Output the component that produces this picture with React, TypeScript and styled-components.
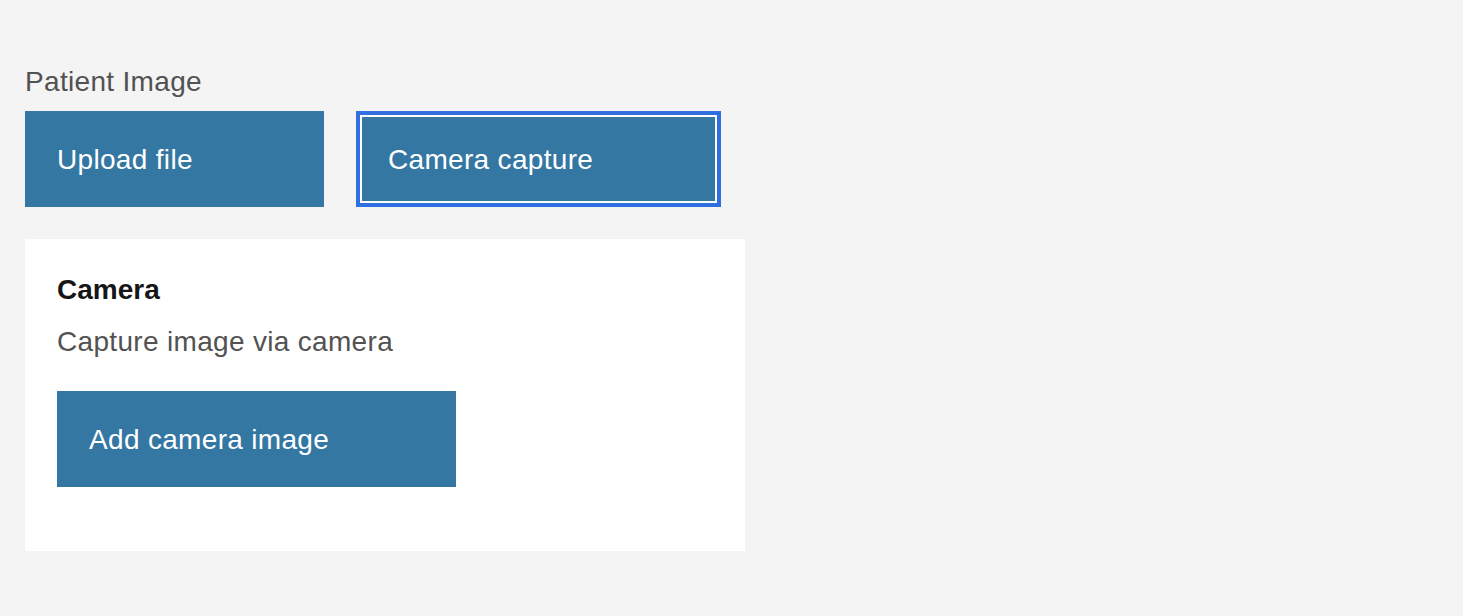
import styled, { createGlobalStyle, css } from "styled-components";

const GlobalStyle = createGlobalStyle`
  html, body {
    margin: 0;
    padding: 0;
    background: #f4f4f4;
  }
  body {
    font-family: "Liberation Sans", Arial, sans-serif;
    -webkit-font-smoothing: antialiased;
  }
`;

interface ButtonProps {
  $width: number;
  $focused?: boolean;
}

export default function App() {
  return (
    <>
      <GlobalStyle />
      <Page>
        <Label>Patient Image</Label>
        <ButtonRow>
          <Button $width={299}>Upload file</Button>
          <Button $width={365} $focused>
            Camera capture
          </Button>
        </ButtonRow>
        <Card>
          <Heading>Camera</Heading>
          <Description>Capture image via camera</Description>
          <Button $width={399}>Add camera image</Button>
        </Card>
      </Page>
    </>
  );
}

const Page = styled.div`
  display: flex;
  flex-direction: column;
  align-items: flex-start;
  padding: 67px 25px 0;
`;

const Label = styled.div`
  font-size: 28px;
  line-height: 30px;
  letter-spacing: 0.32px;
  color: #525252;
  margin-bottom: 14px;
`;

const ButtonRow = styled.div`
  display: flex;
  gap: 32px;
`;

const Button = styled.button<ButtonProps>`
  display: flex;
  align-items: center;
  box-sizing: border-box;
  width: ${({ $width }) => $width}px;
  height: 96px;
  padding: 2px 0 0 32px;
  margin: 0;
  border: 0;
  border-radius: 0;
  background: #3477a2;
  color: #ffffff;
  font-family: inherit;
  font-size: 28px;
  line-height: 36px;
  letter-spacing: 0.32px;
  text-align: left;
  cursor: pointer;

  ${({ $focused }) =>
    $focused &&
    css`
      box-shadow: inset 0 0 0 4px #2f6fdf, inset 0 0 0 6px #ffffff;
    `}
`;

const Card = styled.div`
  display: flex;
  flex-direction: column;
  align-items: flex-start;
  box-sizing: border-box;
  width: 720px;
  margin-top: 32px;
  padding: 33px 32px 64px;
  background: #ffffff;
`;

const Heading = styled.div`
  font-size: 28px;
  line-height: 36px;
  font-weight: 700;
  color: #161616;
`;

const Description = styled.div`
  margin-top: 16px;
  margin-bottom: 31px;
  font-size: 28px;
  line-height: 36px;
  letter-spacing: 0.32px;
  color: #525252;
`;
